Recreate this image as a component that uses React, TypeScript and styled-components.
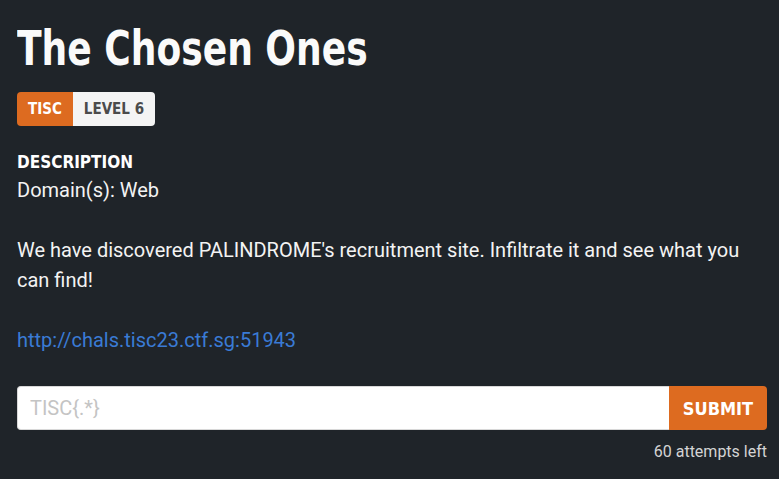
import styled, { createGlobalStyle } from "styled-components";

const GlobalStyle = createGlobalStyle`
  html, body {
    margin: 0;
    background: #1f2429;
  }
  body {
    font-family: Roboto, "Liberation Sans", sans-serif;
    color: #f3f3f3;
  }
`;

const heading = `"DejaVu Sans Condensed", "Liberation Sans", sans-serif`;

const Page = styled.main`
  padding: 20px 12px 0 17px;
  width: 750px;
`;

const Title = styled.h1`
  margin: 0;
  font-family: ${heading};
  font-weight: 700;
  font-size: 48px;
  line-height: 56px;
  color: #fafafa;
  transform: scaleX(0.835);
  transform-origin: left center;
  white-space: nowrap;
`;

const Badges = styled.div`
  display: flex;
  margin-top: 16px;
`;

const Badge = styled.span<{ $accent?: boolean }>`
  display: inline-flex;
  align-items: center;
  height: 34px;
  padding: 0 11px;
  font-family: ${heading};
  font-weight: 700;
  font-size: 15px;
  background: ${(p) => (p.$accent ? "#dd6b20" : "#f4f4f4")};
  color: ${(p) => (p.$accent ? "#ffffff" : "#4b4b4b")};
  border-radius: ${(p) => (p.$accent ? "4px 0 0 4px" : "0 4px 4px 0")};
`;

const Label = styled.h2`
  margin: 26px 0 0;
  font-family: ${heading};
  font-weight: 700;
  font-size: 17px;
  line-height: 20px;
  color: #ffffff;
`;

const Body = styled.p`
  margin: 3px 0 0;
  font-size: 20px;
  line-height: 30px;
  & + & {
    margin-top: 30px;
  }
`;

const Link = styled.a`
  color: #3a7bd5;
  text-decoration: none;
`;

const Form = styled.form`
  display: flex;
  margin-top: 31px;
  height: 44px;
`;

const Input = styled.input`
  flex: 1;
  border: 1px solid #d8d8d8;
  border-right: none;
  border-radius: 4px 0 0 4px;
  padding: 0 12px;
  font-family: Roboto, "Liberation Sans", sans-serif;
  font-size: 20px;
  color: #333;
  background: #fff;
  outline: none;
  &::placeholder {
    color: #c4c4c4;
  }
`;

const Submit = styled.button`
  width: 98px;
  border: none;
  border-radius: 0 4px 4px 0;
  background: #dd6b20;
  color: #fff;
  font-family: ${heading};
  font-weight: 700;
  font-size: 18px;
`;

const Attempts = styled.div`
  text-align: right;
  margin-top: 12px;
  font-size: 16px;
  color: #d4d4d4;
`;

export default function App() {
  return (
    <>
      <GlobalStyle />
      <Page>
        <Title>The Chosen Ones</Title>
        <Badges>
          <Badge $accent>TISC</Badge>
          <Badge>LEVEL 6</Badge>
        </Badges>
        <Label>DESCRIPTION</Label>
        <Body>Domain(s): Web</Body>
        <Body>
          We have discovered PALINDROME's recruitment site. Infiltrate it and
          see what you can find!
        </Body>
        <Body>
          <Link href="#">http://chals.tisc23.ctf.sg:51943</Link>
        </Body>
        <Form onSubmit={(e) => e.preventDefault()}>
          <Input placeholder="TISC{.*}" />
          <Submit type="submit">SUBMIT</Submit>
        </Form>
        <Attempts>60 attempts left</Attempts>
      </Page>
    </>
  );
}
